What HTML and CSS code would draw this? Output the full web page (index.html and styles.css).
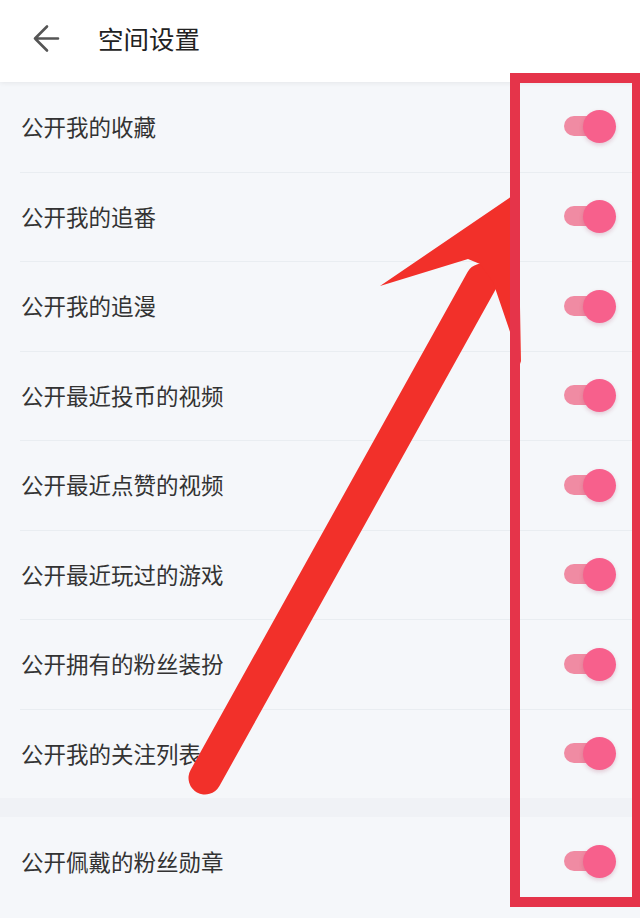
FILE: index.html
```html
<!DOCTYPE html>
<html lang="zh-CN">
<head>
    <meta charset="UTF-8">
    <meta name="viewport" content="width=device-width, initial-scale=1.0">
    <title>空间设置</title>
    <link rel="stylesheet" href="styles.css">
</head>
<body>
    <div class="page">
        <header class="topbar">
            <svg class="back" width="28" height="30" viewBox="0 0 28 30">
                <path d="M26 15.5H3M15 3.5L3 15.5L15 27.5" fill="none" stroke="#555" stroke-width="2.6" stroke-linecap="round" stroke-linejoin="round"/>
            </svg>
            <h1>空间设置</h1>
        </header>

        <ul class="group">
            <li class="row"><span>公开我的收藏</span><i class="switch on"></i></li>
            <li class="row"><span>公开我的追番</span><i class="switch on"></i></li>
            <li class="row"><span>公开我的追漫</span><i class="switch on"></i></li>
            <li class="row"><span>公开最近投币的视频</span><i class="switch on"></i></li>
            <li class="row"><span>公开最近点赞的视频</span><i class="switch on"></i></li>
            <li class="row"><span>公开最近玩过的游戏</span><i class="switch on"></i></li>
            <li class="row"><span>公开拥有的粉丝装扮</span><i class="switch on"></i></li>
            <li class="row"><span>公开我的关注列表</span><i class="switch on"></i></li>
        </ul>
        <div class="band"></div>
        <ul class="group">
            <li class="row"><span>公开佩戴的粉丝勋章</span><i class="switch on"></i></li>
        </ul>

        <!-- hand-drawn pointer toward the switches -->
        <svg class="pointer" width="640" height="918" viewBox="0 0 640 918">
            <line x1="205" y1="778" x2="482" y2="280" stroke="#f2302a" stroke-width="33" stroke-linecap="round"/>
            <polygon points="518,192 380,286 468,259 480,264 493,282 521,364" fill="#f2302a"/>
        </svg>
        <div class="frame"></div>
    </div>
</body>
</html>
```

FILE: styles.css
```css
html, body {
    margin: 0;
    padding: 0;
}
body {
    font-family: "Noto Sans CJK SC", "Noto Sans", sans-serif;
    background: #f5f7fa;
    color: #333;
}
.page {
    position: relative;
    width: 640px;
    height: 918px;
    overflow: hidden;
}

.topbar {
    display: flex;
    align-items: center;
    height: 82px;
    padding: 0 0 8px 32px;
    box-sizing: border-box;
    background: #fff;
    box-shadow: 0 1px 5px rgba(0, 0, 0, 0.07);
    position: relative;
    z-index: 1;
}
.back {
    margin-top: 2px;
}
.topbar h1 {
    margin: 0 0 0 38px;
    font-size: 25.5px;
    font-weight: 400;
    color: #222;
}

.group {
    list-style: none;
    margin: 0;
    padding: 0;
}
.row {
    display: flex;
    align-items: center;
    justify-content: space-between;
    height: 89.5px;
    padding: 0 24px 0 21px;
    font-size: 22.5px;
    box-sizing: border-box;
}
.row + .row {
    border-top: 1px solid #e9edf1;
    margin-left: 20px;
    padding-left: 1px;
}
.row span {
    margin-top: -2px;
}

.band {
    height: 19px;
    background: #f0f2f6;
}

.switch {
    display: block;
    position: relative;
    width: 52px;
    height: 33px;
}
.switch::before {
    content: "";
    position: absolute;
    left: 0;
    top: 6px;
    width: 40px;
    height: 20px;
    border-radius: 10px;
    background: #f08ba3;
}
.switch::after {
    content: "";
    position: absolute;
    right: 0;
    top: 0;
    width: 33px;
    height: 33px;
    border-radius: 50%;
    background: #f7608c;
    box-shadow: 0 2px 4px rgba(160, 40, 80, 0.22);
}

.pointer {
    position: absolute;
    left: 0;
    top: 0;
    z-index: 2;
}
.frame {
    position: absolute;
    left: 510px;
    top: 73px;
    width: 132px;
    height: 834px;
    border: 10px solid #e5344a;
    box-sizing: border-box;
    z-index: 3;
}
```
